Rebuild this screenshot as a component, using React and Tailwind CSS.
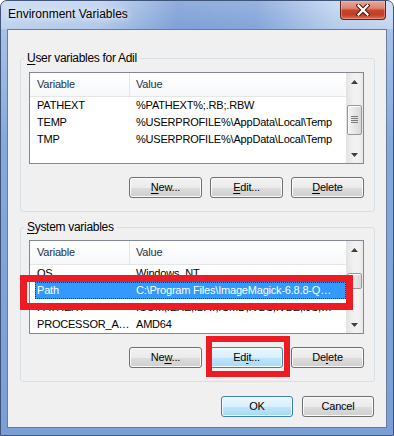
import React from "react";

function Arrow({ up }) {
  return (
    <svg width="7" height="4" viewBox="0 0 7 4">
      {up ? (
        <polygon points="3.5,0 7,4 0,4" fill="#404040" />
      ) : (
        <polygon points="0,0 7,0 3.5,4" fill="#404040" />
      )}
    </svg>
  );
}

function Grip() {
  return (
    <svg width="7" height="8" viewBox="0 0 7 8">
      <rect x="0" y="0" width="7" height="1" fill="#7a7a7a" />
      <rect x="0" y="2" width="7" height="1" fill="#7a7a7a" />
      <rect x="0" y="4" width="7" height="1" fill="#7a7a7a" />
      <rect x="0" y="6" width="7" height="1" fill="#7a7a7a" />
    </svg>
  );
}

function ScrollBar({ big }) {
  return (
    <div className="flex w-[17px] flex-col bg-[linear-gradient(to_right,#e2e2e2,#f2f2f2_45%,#f2f2f2_70%,#e9e9e9)]">
      <div className="flex h-[17px] items-center justify-center">
        <Arrow up />
      </div>
      <div className="flex flex-1 flex-col items-center">
        {big ? (
          <div className="mt-[15px] flex h-[30px] w-[15px] items-center justify-center rounded-[2px] border border-[#979797] bg-[linear-gradient(to_right,#f3f3f3,#e7e7e7_50%,#d8d8d8)] shadow-[inset_1px_1px_0_#ffffff]">
            <Grip />
          </div>
        ) : (
          <div className="mt-[15px] h-[16px] w-[15px] rounded-[2px] border border-[#979797] bg-[linear-gradient(to_right,#f3f3f3,#e7e7e7_50%,#d8d8d8)] shadow-[inset_1px_1px_0_#ffffff]" />
        )}
      </div>
      <div className="flex h-[17px] items-center justify-center">
        <Arrow />
      </div>
    </div>
  );
}

function Row({ name, value, selected }) {
  return (
    <div
      className={
        selected
          ? "ml-[5px] flex h-[17px] items-center bg-[#3399ff] text-white outline-1 outline-dotted outline-[#0d3d70] -outline-offset-1"
          : "ml-[5px] flex h-[17px] items-center text-black"
      }
    >
      <div className="w-[95px] shrink-0 whitespace-nowrap pl-[2px]">{name}</div>
      <div className="min-w-0 flex-1 truncate whitespace-nowrap pl-[6px]">{value}</div>
    </div>
  );
}

function ListView({ rows, tall }) {
  return (
    <div
      className={
        tall
          ? "flex h-[94px] w-full border border-[#828790] bg-white"
          : "flex h-[92px] w-full border border-[#828790] bg-white"
      }
    >
      <div className="flex min-w-0 flex-1 flex-col overflow-hidden">
        <div className="flex h-[24px] shrink-0 border-b border-[#e5e5e5] bg-[linear-gradient(to_bottom,#ffffff,#f7f8fa)] text-[#1e2f4a]">
          <div className="flex w-[100px] items-center border-r border-[#e3e6ea] pl-[7px]">Variable</div>
          <div className="flex items-center pl-[6px]">Value</div>
        </div>
        {rows.map((r, i) => (
          <Row key={i} name={r[0]} value={r[1]} selected={r[2]} />
        ))}
      </div>
      <ScrollBar big={!tall} />
    </div>
  );
}

function Btn({ children, hot, wide }) {
  const size = wide ? "w-[72px]" : "w-[73px]";
  const look = hot
    ? "border-[#3c7fb1] bg-[linear-gradient(to_bottom,#eaf6fd_0%,#d9f0fc_50%,#bee6fd_50%,#a7d9f5_100%)] shadow-[inset_0_0_0_1px_#f2fbff]"
    : "border-[#707070] bg-[linear-gradient(to_bottom,#f2f2f2_0%,#ebebeb_50%,#dddddd_50%,#cfcfcf_100%)] shadow-[inset_0_0_0_1px_#fbfbfb]";
  return (
    <div className={`flex h-[21px] ${size} items-center justify-center rounded-[3px] border ${look}`}>
      <span>{children}</span>
    </div>
  );
}

function U({ children }) {
  return <span className="underline underline-offset-[2px]">{children}</span>;
}

export default function App() {
  return (
    <div className="relative h-[436px] w-[394px] overflow-hidden bg-white font-['Segoe_UI','Liberation_Sans',Arial,sans-serif] text-[11px] leading-[15px] tracking-[-0.2px] text-black">
      <div className="flex h-[436px] w-[394px] flex-col rounded-t-[7px] border border-[#3f5478] bg-[linear-gradient(to_bottom,#c2d5f0_0px,#a8c2e8_28px,#86a9dc_140px,#7a9fd6_436px)]">
        {/* title bar */}
        <div className="flex h-[28px] shrink-0 items-start rounded-t-[6px] bg-[linear-gradient(to_right,rgba(255,255,255,0.25)_0%,rgba(255,255,255,0.1)_25%,rgba(40,90,180,0.32)_45%,rgba(40,90,180,0.28)_65%,rgba(255,255,255,0.15)_85%,rgba(255,255,255,0.3)_100%)]">
          <div className="pl-[7px] pt-[6px] text-[12px] tracking-normal text-black [text-shadow:0_0_6px_rgba(255,255,255,0.9),0_0_10px_rgba(255,255,255,0.7)]">
            Environment Variables
          </div>
          <div className="ml-auto mr-[7px] flex h-[19px] w-[46px] items-center justify-center rounded-b-[4px] border border-t-0 border-[#5b2319] bg-[linear-gradient(to_bottom,#e8a797_0%,#dc8572_40%,#c8452f_52%,#c23c27_75%,#dc6f56_100%)] shadow-[inset_0_0_0_1px_rgba(255,200,190,0.4)]">
            <svg width="14" height="12" viewBox="0 0 14 12">
              <path d="M2.5 1.5 L11.5 10.5 M11.5 1.5 L2.5 10.5" stroke="#4a1a12" strokeWidth="4.2" strokeLinecap="square" />
              <path d="M2.5 1.5 L11.5 10.5 M11.5 1.5 L2.5 10.5" stroke="#ffffff" strokeWidth="2.2" strokeLinecap="square" />
            </svg>
          </div>
        </div>

        {/* client area */}
        <div className="mx-[6px] flex h-[399px] shrink-0 flex-col border border-[#677c9b] bg-[#f0f0f0]">
          <fieldset className="m-0 ml-[12px] mt-[21px] w-[355px] rounded-[3px] border border-[#d5dfe5] p-0">
            <legend className="ml-[3px] px-[3px] text-[12px] leading-[14px] tracking-[-0.3px]">
              <U>U</U>ser variables for Adil
            </legend>
            <div className="flex flex-col pb-[13px] pl-[8px] pr-[10px] pt-[7px]">
              <ListView
                rows={[
                  ["PATHEXT", "%PATHEXT%;.RB;.RBW"],
                  ["TEMP", "%USERPROFILE%\\AppData\\Local\\Temp"],
                  ["TMP", "%USERPROFILE%\\AppData\\Local\\Temp"],
                ]}
              />
              <div className="mt-[13px] flex justify-end gap-[8px]">
                <Btn>
                  <U>N</U>ew...
                </Btn>
                <Btn>
                  <U>E</U>dit...
                </Btn>
                <Btn>
                  <U>D</U>elete
                </Btn>
              </div>
            </div>
          </fieldset>

          <fieldset className="m-0 ml-[12px] mt-[8px] w-[355px] rounded-[3px] border border-[#d5dfe5] p-0">
            <legend className="ml-[3px] px-[3px] text-[12px] leading-[14px] tracking-[-0.3px]">
              <U>S</U>ystem variables
            </legend>
            <div className="flex flex-col pb-[13px] pl-[8px] pr-[10px] pt-[6px]">
              <ListView
                tall
                rows={[
                  ["OS", "Windows_NT"],
                  ["Path", "C:\\Program Files\\ImageMagick-6.8.8-Q…", true],
                  ["PATHEXT", ".COM;.EXE;.BAT;.CMD;.VBS;.VBE;.JS;…"],
                  ["PROCESSOR_A…", "AMD64"],
                ]}
              />
              <div className="mt-[13px] flex justify-end gap-[8px]">
                <Btn>
                  Ne<U>w</U>...
                </Btn>
                <Btn hot>
                  Ed<U>i</U>t...
                </Btn>
                <Btn>
                  De<U>l</U>ete
                </Btn>
              </div>
            </div>
          </fieldset>

          <div className="mt-[14px] flex justify-end gap-[9px] pr-[12px]">
            <Btn hot wide>
              OK
            </Btn>
            <Btn wide>Cancel</Btn>
          </div>
        </div>
      </div>

      {/* red annotation boxes */}
      <div className="absolute left-[20px] top-[275px] h-[35px] w-[333px] border-[7px] border-[#ed1c24]" />
      <div className="absolute left-[206px] top-[336px] h-[41px] w-[84px] border-[6px] border-[#ed1c24]" />
    </div>
  );
}
